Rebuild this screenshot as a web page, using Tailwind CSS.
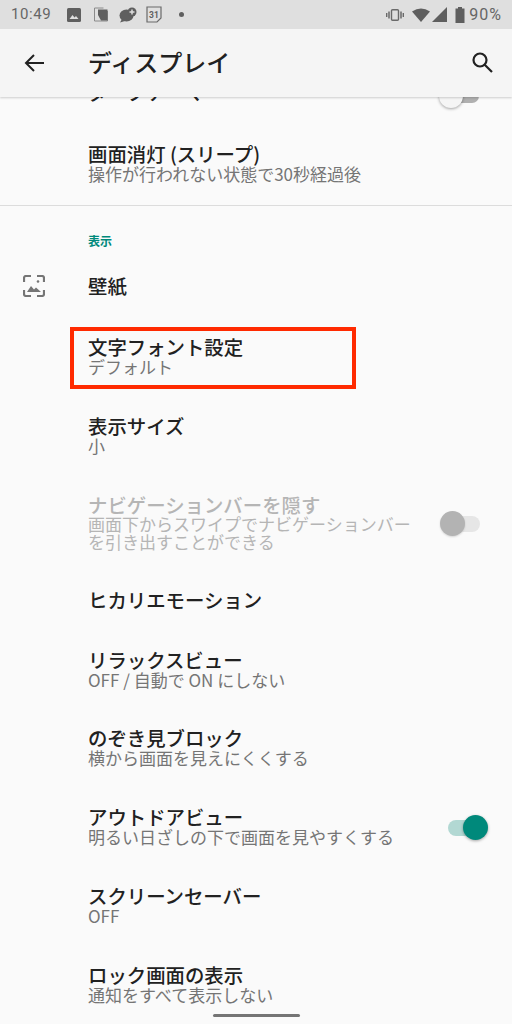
<!DOCTYPE html>
<html lang="ja">
  <head>
    <meta charset="UTF-8" />
    <title>ディスプレイ</title>
    <script src="https://cdn.jsdelivr.net/npm/@tailwindcss/browser@4"></script>
  </head>
  <body class="bg-[#fafafa]">
    <div class="w-[512px] h-[1024px] overflow-hidden relative bg-[#fafafa] font-['Noto_Sans_CJK_JP','Noto_Sans',sans-serif]">
      <!-- status bar -->
      <div class="relative z-20 h-[29px] bg-[#dfdfdf] flex items-center text-[#666666]">
        <span class="ml-[11px] w-[40px] text-[15px] tracking-[0.6px] font-['Roboto',sans-serif]">10:49</span>
        <div class="ml-[16px] flex items-center">
          <svg class="w-[14px] h-[14px]" viewBox="0 0 14 14"><rect width="14" height="14" rx="1.5" fill="#5f5f5f"/><path d="M2.5 11l3-4 2 2.5 1.5-1.5 2.5 3z" fill="#dfdfdf"/></svg>
          <svg class="ml-[13px] w-[14px] h-[15px]" viewBox="0 0 14 15"><path d="M.5 1h9M.5 1v13h13V4" fill="none" stroke="#8a8a8a"/><path d="M4 2.500h9.500v11H7L4 8z" fill="#5f5f5f"/></svg>
          <svg class="ml-[11px] w-[18px] h-[16px]" viewBox="0 0 18 16"><ellipse cx="7.500" cy="8.500" rx="7" ry="6" fill="#5f5f5f"/><path d="M3 12l-2 3.500 5-1.500z" fill="#5f5f5f"/><circle cx="13" cy="5" r="4.500" fill="#5f5f5f"/><path d="M13 2.500v5M10.500 5h5" stroke="#dfdfdf" stroke-width="1.500"/></svg>
          <svg class="ml-[9px] w-[16px] h-[17px]" viewBox="0 0 16 17"><path d="M1 1h14v11l-4 4H1z" fill="none" stroke="#6a6a6a" stroke-width="1.200"/><text x="3" y="11.500" font-size="8.500" font-weight="700" fill="#5f5f5f" font-family="Roboto">31</text></svg>
          <span class="ml-[17px] w-[5px] h-[5px] rounded-full bg-[#5f5f5f]"></span>
        </div>
        <div class="ml-auto flex items-center">
          <svg class="w-[18px] h-[12px]" viewBox="0 0 18 12"><rect x="5.500" y=".7" width="7" height="10.600" rx="1" fill="none" stroke="#6a6a6a" stroke-width="1.400"/><path d="M3 2.500v7M15 2.500v7" stroke="#6a6a6a" stroke-width="1.500"/><path d="M.7 4v4M17.300 4v4" stroke="#6a6a6a" stroke-width="1.400"/></svg>
          <svg class="ml-[8px] w-[18px] h-[14px]" viewBox="0 0 18 14"><path d="M0 3.500Q9-2.500 18 3.500L9 14z" fill="#5f5f5f"/></svg>
          <svg class="ml-[2px] w-[15px] h-[15px]" viewBox="0 0 15 15"><path d="M15 0v15H0z" fill="#5f5f5f"/></svg>
          <svg class="ml-[8px] w-[10px] h-[16px]" viewBox="0 0 10 16"><path d="M3 0h4v1.500h2.500V16H.5V1.500H3z" fill="#5f5f5f"/></svg>
          <span class="ml-[4px] mr-[10px] text-[16px] tracking-[1px] font-['Roboto',sans-serif]">90%</span>
        </div>
      </div>

      <!-- app bar -->
      <header class="relative z-10 h-[68px] bg-[#f5f5f5] shadow-[0_1px_2px_rgba(0,0,0,0.18)] flex items-center">
        <svg class="ml-[24px] w-[20px] h-[20px]" viewBox="0 0 20 20" fill="none" stroke="#212121" stroke-width="2"><path d="M20 10H2M10 2l-8 8 8 8"/></svg>
        <h1 class="ml-[44px] mb-[2px] text-[24px] leading-none font-medium text-[#212121]">ディスプレイ</h1>
        <svg class="ml-auto mr-[19px] mb-[2px] w-[22px] h-[22px]" viewBox="0 0 22 22" fill="none" stroke="#212121" stroke-width="2.200"><circle cx="9" cy="9" r="6.500"/><path d="M13.500 13.500l7.500 7.500"/></svg>
      </header>

      <main class="relative">
        <!-- row cut off by the app bar -->
        <div class="h-[28px] relative overflow-visible">
          <p class="absolute left-[88px] -top-[17px] text-[19.400px] leading-[24px] font-medium text-[#212121]">ダークテーマ</p>
          <div class="absolute left-[439px] top-[-11px] w-[40px] h-[16px]">
            <div class="absolute left-[5px] top-[3px] w-[35px] h-[14px] rounded-full bg-[#b0b0b0]"></div>
            <div class="absolute left-0 -top-[2px] w-[24px] h-[24px] rounded-full bg-[#f5f5f5] shadow-[0_1px_3px_rgba(0,0,0,0.35)]"></div>
          </div>
        </div>

        <div class="h-[80px] pl-[88px] pb-[2px] flex flex-col justify-center">
          <p class="text-[19.400px] leading-[20px] font-medium text-[#212121]">画面消灯 (スリープ)</p>
          <p class="text-[17px] leading-[20px] text-[#757575]">操作が行われない状態で30秒経過後</p>
        </div>
        <div class="h-px bg-[#dcdcdc]"></div>

        <div class="h-[51px] pl-[88px] pt-[27px]">
          <p class="text-[12px] leading-[16px] font-bold text-[#00897b]">表示</p>
        </div>

        <div class="h-[61px] pb-[3px] flex items-center">
          <svg class="ml-[23px] w-[22px] h-[22px]" viewBox="0 0 22 22" fill="none" stroke="#757575" stroke-width="2.200"><path d="M1 7V3a2 2 0 0 1 2-2h5M14 1h5a2 2 0 0 1 2 2v4M1 15v4a2 2 0 0 0 2 2h5M14 21h5a2 2 0 0 0 2-2v-4"/><circle cx="15" cy="6.500" r="1.300" fill="#757575" stroke="none"/><path d="M4 17l4-6 3 3.500 2-2 5 4.500z" fill="#757575" stroke="none"/></svg>
          <p class="ml-[43px] text-[19.400px] leading-[20px] font-medium text-[#212121]">壁紙</p>
        </div>

        <div class="relative h-[79px] pl-[88px] pb-[2px] flex flex-col justify-center">
          <p class="text-[19.400px] leading-[20px] font-medium text-[#212121]">文字フォント設定</p>
          <p class="text-[17px] leading-[20px] text-[#757575]">デフォルト</p>
          <div class="absolute left-[70px] top-[9px] w-[286px] h-[62px] border-4 border-[#ff2a00]"></div>
        </div>

        <div class="h-[79px] pl-[88px] pb-[2px] flex flex-col justify-center">
          <p class="text-[19.400px] leading-[20px] font-medium text-[#212121]">表示サイズ</p>
          <p class="text-[17px] leading-[20px] text-[#757575]">小</p>
        </div>

        <div class="h-[95px] pl-[88px] pr-[32px] flex items-center justify-between">
          <div class="pb-[2px]">
            <p class="text-[19.400px] leading-[20px] font-medium text-[#b5b5b5]">ナビゲーションバーを隠す</p>
            <p class="text-[17px] leading-[18px] text-[#b5b5b5]">画面下からスワイプでナビゲーションバー<br />を引き出すことができる</p>
          </div>
          <div class="relative w-[40px] h-[26px] shrink-0">
            <div class="absolute left-[5px] top-[5px] w-[35px] h-[16px] rounded-full bg-[#e6e6e6]"></div>
            <div class="absolute left-0 top-0 w-[25px] h-[25px] rounded-full bg-[#b3b3b3] shadow-[0_1px_2px_rgba(0,0,0,0.15)]"></div>
          </div>
        </div>

        <div class="h-[60px] pl-[88px] pb-[2px] flex items-center">
          <p class="text-[19.400px] leading-[20px] font-medium text-[#212121]">ヒカリエモーション</p>
        </div>

        <div class="h-[79px] pl-[88px] pb-[2px] flex flex-col justify-center">
          <p class="text-[19.400px] leading-[20px] font-medium text-[#212121]">リラックスビュー</p>
          <p class="text-[17px] leading-[20px] text-[#757575]">OFF / 自動で ON にしない</p>
        </div>

        <div class="h-[78px] pl-[88px] pb-[2px] flex flex-col justify-center">
          <p class="text-[19.400px] leading-[20px] font-medium text-[#212121]">のぞき見ブロック</p>
          <p class="text-[17px] leading-[20px] text-[#757575]">横から画面を見えにくくする</p>
        </div>

        <div class="h-[79px] pl-[88px] pr-[24px] flex items-center justify-between">
          <div class="pb-[2px]">
            <p class="text-[19.400px] leading-[20px] font-medium text-[#212121]">アウトドアビュー</p>
            <p class="text-[17px] leading-[20px] text-[#757575]">明るい日ざしの下で画面を見やすくする</p>
          </div>
          <div class="relative w-[40px] h-[26px] shrink-0">
            <div class="absolute left-0 top-[5px] w-[35px] h-[16px] rounded-full bg-[#b2d8d3]"></div>
            <div class="absolute left-[15px] top-0 w-[25px] h-[25px] rounded-full bg-[#00897b] shadow-[0_1px_3px_rgba(0,0,0,0.35)]"></div>
          </div>
        </div>

        <div class="h-[79px] pl-[88px] pb-[2px] flex flex-col justify-center">
          <p class="text-[19.400px] leading-[20px] font-medium text-[#212121]">スクリーンセーバー</p>
          <p class="text-[17px] leading-[20px] text-[#757575]">OFF</p>
        </div>

        <div class="h-[79px] pl-[88px] pb-[2px] flex flex-col justify-center">
          <p class="text-[19.400px] leading-[20px] font-medium text-[#212121]">ロック画面の表示</p>
          <p class="text-[17px] leading-[20px] text-[#757575]">通知をすべて表示しない</p>
        </div>
      </main>

      <!-- gesture pill -->
      <div class="absolute left-[213px] top-[1014px] w-[87px] h-[3px] rounded-full bg-[#757575]"></div>
    </div>
  </body>
</html>
